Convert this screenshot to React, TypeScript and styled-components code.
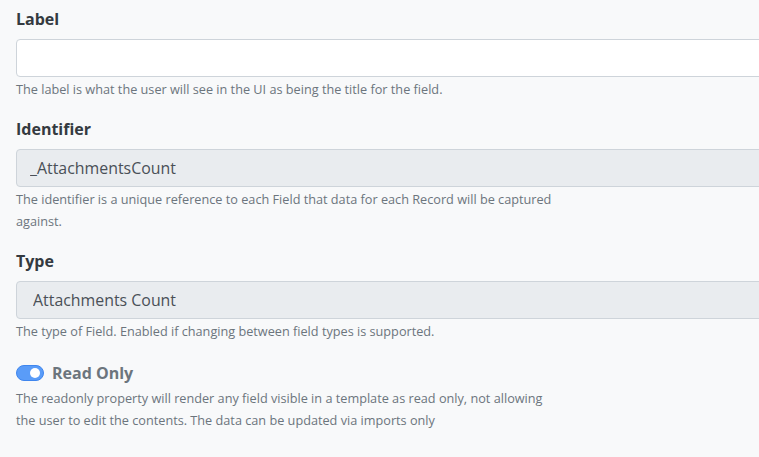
import React from 'react';
import styled, {createGlobalStyle} from "styled-components";

const GlobalStyle = createGlobalStyle`
  html, body {
    margin: 0;
    padding: 0;
    background: #f8f9fa;
    overflow: hidden;
  }
  body {
    font-family: "Open Sans", "Liberation Sans", sans-serif;
  }
`

const Page = styled.div`
  width: 800px;
  padding: 7px 16px 0 16px;
  box-sizing: border-box;
`

const FieldGroup = styled.div`
  display: flex;
  flex-direction: column;
  margin-bottom: 17px;
`

const FieldTitle = styled.label`
  font-size: 16px;
  font-weight: 700;
  line-height: 24px;
  color: #343a40;
  margin-bottom: 8px;
`

const TextInput = styled.input<{ $disabled?: boolean; $pad?: number }>`
  height: 38px;
  box-sizing: border-box;
  width: 100%;
  border: 1px solid #ced4da;
  border-radius: 4px;
  background: ${p => p.$disabled ? "#e9ecef" : "#fff"};
  color: #495057;
  font-family: inherit;
  font-size: 15.9px;
  padding: 0 ${p => p.$pad ?? 13}px;
  outline: none;
`

const HelpText = styled.p`
  margin: 1px 0 0 0;
  max-width: 540px;
  font-size: 12.7px;
  line-height: 22px;
  color: #6c757d;
`

const ToggleRow = styled.div`
  display: flex;
  align-items: center;
  gap: 8px;
  height: 27px;
`

const Toggle = styled.span<{ $on: boolean }>`
  position: relative;
  display: inline-block;
  width: 28px;
  height: 16px;
  box-sizing: border-box;
  border-radius: 8px;
  border: 1px solid ${p => p.$on ? "#3f86ee" : "#adb5bd"};
  background: ${p => p.$on ? "#5a9cf8" : "#fff"};

  &::after {
    content: "";
    position: absolute;
    top: 2px;
    left: ${p => p.$on ? "13px" : "2px"};
    width: 10px;
    height: 10px;
    border-radius: 50%;
    background: ${p => p.$on ? "#fff" : "#adb5bd"};
  }
`

const ToggleLabel = styled.span`
  font-size: 16px;
  font-weight: 700;
  color: #6c757d;
`

const App = () => {
    return (
        <>
            <GlobalStyle/>
            <Page>
                <FieldGroup>
                    <FieldTitle>Label</FieldTitle>
                    <TextInput defaultValue=""/>
                    <HelpText>The label is what the user will see in the UI as being the title for the field.</HelpText>
                </FieldGroup>
                <FieldGroup>
                    <FieldTitle>Identifier</FieldTitle>
                    <TextInput $disabled readOnly value="_AttachmentsCount"/>
                    <HelpText>The identifier is a unique reference to each Field that data for each Record will be
                        captured against.</HelpText>
                </FieldGroup>
                <FieldGroup>
                    <FieldTitle>Type</FieldTitle>
                    <TextInput $disabled $pad={16} readOnly value="Attachments Count"/>
                    <HelpText>The type of Field. Enabled if changing between field types is supported.</HelpText>
                </FieldGroup>
                <FieldGroup>
                    <ToggleRow>
                        <Toggle $on={true}/>
                        <ToggleLabel>Read Only</ToggleLabel>
                    </ToggleRow>
                    <HelpText>The readonly property will render any field visible in a template as read only, not
                        allowing the user to edit the contents. The data can be updated via imports only</HelpText>
                </FieldGroup>
            </Page>
        </>
    );
}

export default App;
